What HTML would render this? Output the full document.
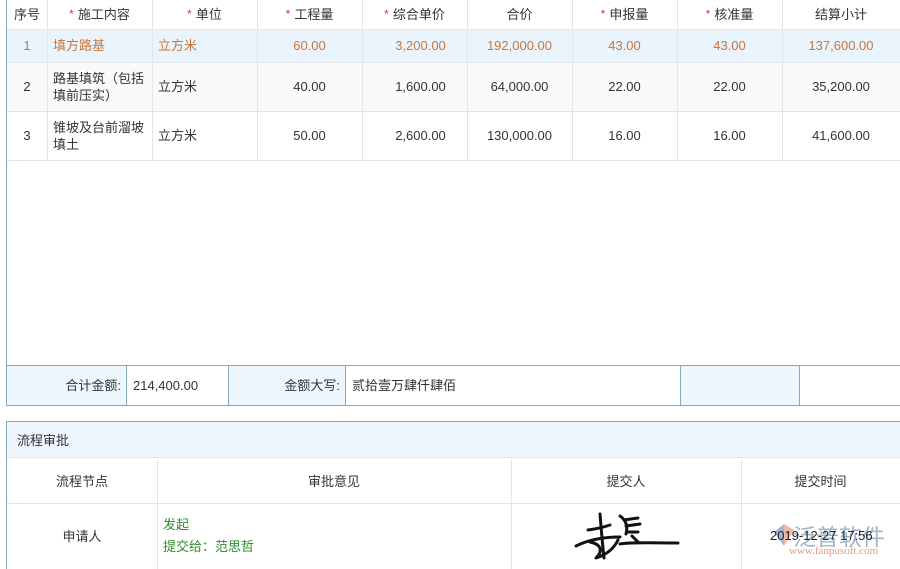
<!DOCTYPE html>
<html><head><meta charset="utf-8"><style>
*{margin:0;padding:0;box-sizing:border-box}
body{width:900px;height:569px;overflow:hidden;background:#fff;font-family:"Liberation Sans","Noto Sans CJK SC",sans-serif;font-size:13px;color:#333;position:relative}
.a{position:absolute}
.c{position:absolute;display:flex;align-items:center;justify-content:center;text-align:center;line-height:17px}
.l{justify-content:flex-start;text-align:left;padding-left:6px}
.r{justify-content:flex-end;padding-right:6px}
.s{color:#d9363e;margin-right:4px;font-size:12px}
.o{color:#c9763a}
.g{color:#2e8b2e}
</style></head><body>
<div class="a" style="left:6px;top:0;width:1px;height:405px;background:#86a9ba"></div>
<div class="a" style="left:7px;top:29px;width:893px;height:33px;background:#eaf4fd"></div>
<div class="a" style="left:7px;top:62px;width:893px;height:49px;background:#fafafa"></div>
<div class="a" style="left:7px;top:29px;width:893px;height:1px;background:#e2e6ea"></div>
<div class="a" style="left:7px;top:62px;width:893px;height:1px;background:#e2e6ea"></div>
<div class="a" style="left:7px;top:111px;width:893px;height:1px;background:#e2e6ea"></div>
<div class="a" style="left:7px;top:160px;width:893px;height:1px;background:#e2e6ea"></div>
<div class="a" style="left:47px;top:0;width:1px;height:160px;background:#e2e6ea"></div>
<div class="a" style="left:152px;top:0;width:1px;height:160px;background:#e2e6ea"></div>
<div class="a" style="left:257px;top:0;width:1px;height:160px;background:#e2e6ea"></div>
<div class="a" style="left:362px;top:0;width:1px;height:160px;background:#e2e6ea"></div>
<div class="a" style="left:467px;top:0;width:1px;height:160px;background:#e2e6ea"></div>
<div class="a" style="left:572px;top:0;width:1px;height:160px;background:#e2e6ea"></div>
<div class="a" style="left:677px;top:0;width:1px;height:160px;background:#e2e6ea"></div>
<div class="a" style="left:782px;top:0;width:1px;height:160px;background:#e2e6ea"></div>
<div class="c" style="left:7px;top:0;width:40px;height:29px">序号</div>
<div class="c" style="left:47px;top:0;width:105px;height:29px"><span class="s">*</span>施工内容</div>
<div class="c" style="left:152px;top:0;width:105px;height:29px"><span class="s">*</span>单位</div>
<div class="c" style="left:257px;top:0;width:105px;height:29px"><span class="s">*</span>工程量</div>
<div class="c" style="left:362px;top:0;width:105px;height:29px"><span class="s">*</span>综合单价</div>
<div class="c" style="left:467px;top:0;width:105px;height:29px">合价</div>
<div class="c" style="left:572px;top:0;width:105px;height:29px"><span class="s">*</span>申报量</div>
<div class="c" style="left:677px;top:0;width:105px;height:29px"><span class="s">*</span>核准量</div>
<div class="c" style="left:782px;top:0;width:118px;height:29px">结算小计</div>
<div class="c o" style="left:7px;top:29px;width:40px;height:33px">1</div>
<div class="c l o" style="left:47px;top:29px;width:105px;height:33px">填方路基</div>
<div class="c l o" style="left:152px;top:29px;width:105px;height:33px">立方米</div>
<div class="c o" style="left:257px;top:29px;width:105px;height:33px">60.00</div>
<div class="c o" style="left:362px;top:29px;width:105px;height:33px;padding-left:12px">3,200.00</div>
<div class="c o" style="left:467px;top:29px;width:105px;height:33px">192,000.00</div>
<div class="c o" style="left:572px;top:29px;width:105px;height:33px">43.00</div>
<div class="c o" style="left:677px;top:29px;width:105px;height:33px">43.00</div>
<div class="c o" style="left:782px;top:29px;width:118px;height:33px">137,600.00</div>
<div class="c" style="left:7px;top:62px;width:40px;height:49px">2</div>
<div class="c l" style="left:47px;top:62px;width:105px;height:49px">路基填筑（包括填前压实）</div>
<div class="c l" style="left:152px;top:62px;width:105px;height:49px">立方米</div>
<div class="c" style="left:257px;top:62px;width:105px;height:49px">40.00</div>
<div class="c" style="left:362px;top:62px;width:105px;height:49px;padding-left:12px">1,600.00</div>
<div class="c" style="left:467px;top:62px;width:105px;height:49px">64,000.00</div>
<div class="c" style="left:572px;top:62px;width:105px;height:49px">22.00</div>
<div class="c" style="left:677px;top:62px;width:105px;height:49px">22.00</div>
<div class="c" style="left:782px;top:62px;width:118px;height:49px">35,200.00</div>
<div class="c" style="left:7px;top:111px;width:40px;height:49px">3</div>
<div class="c l" style="left:47px;top:111px;width:105px;height:49px">锥坡及台前溜坡填土</div>
<div class="c l" style="left:152px;top:111px;width:105px;height:49px">立方米</div>
<div class="c" style="left:257px;top:111px;width:105px;height:49px">50.00</div>
<div class="c" style="left:362px;top:111px;width:105px;height:49px;padding-left:12px">2,600.00</div>
<div class="c" style="left:467px;top:111px;width:105px;height:49px">130,000.00</div>
<div class="c" style="left:572px;top:111px;width:105px;height:49px">16.00</div>
<div class="c" style="left:677px;top:111px;width:105px;height:49px">16.00</div>
<div class="c" style="left:782px;top:111px;width:118px;height:49px">41,600.00</div>
<div class="a" style="left:6px;top:365px;width:894px;height:41px;border:1px solid #86a9ba;border-right:none"></div>
<div class="a" style="left:7px;top:366px;width:120px;height:39px;background:#eef6fd;border-right:1px solid #86a9ba"></div>
<div class="a" style="left:228px;top:366px;width:118px;height:39px;background:#eef6fd;border-left:1px solid #86a9ba;border-right:1px solid #86a9ba"></div>
<div class="a" style="left:680px;top:366px;width:120px;height:39px;background:#eef6fd;border-left:1px solid #86a9ba;border-right:1px solid #86a9ba"></div>
<div class="c r" style="left:7px;top:366px;width:120px;height:39px">合计金额:</div>
<div class="c l" style="left:127px;top:366px;width:101px;height:39px">214,400.00</div>
<div class="c r" style="left:228px;top:366px;width:118px;height:39px">金额大写:</div>
<div class="c l" style="left:346px;top:366px;width:334px;height:39px">贰拾壹万肆仟肆佰</div>
<div class="a" style="left:6px;top:421px;width:894px;height:148px;border-left:1px solid #86a9ba;border-top:1px solid #86a9ba"></div>
<div class="a" style="left:7px;top:422px;width:893px;height:36px;background:#eef5fd;border-bottom:1px solid #e2e6ea"></div>
<div class="c l" style="left:7px;top:422px;width:200px;height:36px;padding-left:10px">流程审批</div>
<div class="a" style="left:7px;top:503px;width:893px;height:1px;background:#e2e6ea"></div>
<div class="a" style="left:157px;top:459px;width:1px;height:110px;background:#e2e6ea"></div>
<div class="a" style="left:511px;top:459px;width:1px;height:110px;background:#e2e6ea"></div>
<div class="a" style="left:741px;top:459px;width:1px;height:110px;background:#e2e6ea"></div>
<div class="c" style="left:7px;top:459px;width:150px;height:44px">流程节点</div>
<div class="c" style="left:157px;top:459px;width:354px;height:44px">审批意见</div>
<div class="c" style="left:511px;top:459px;width:230px;height:44px">提交人</div>
<div class="c" style="left:741px;top:459px;width:159px;height:44px">提交时间</div>
<div class="c" style="left:7px;top:504px;width:150px;height:65px">申请人</div>
<div class="a g" style="left:163px;top:514px;line-height:22px">发起<br>提交给：范思哲</div>
<svg class="a" style="left:574px;top:510px" width="106" height="52" viewBox="0 0 106 52">
<g fill="none" stroke="#111" stroke-width="3" stroke-linecap="round" stroke-linejoin="round">
<path d="M2 36 C14 30 30 27 46 27"/>
<path d="M14 20 C22 19 30 17 36 15"/>
<path d="M26 4 C27 16 28 30 30 48"/>
<path d="M16 32 C26 34 30 40 22 48 C34 44 40 38 44 30"/>
<path d="M46 6 C52 10 54 16 52 24"/>
<path d="M50 10 L64 8 M52 16 L66 14 M54 22 L64 22 M58 26 L64 32"/>
<path d="M46 34 C58 32 80 33 104 33"/>
</g></svg>
<svg class="a" style="left:772px;top:522px" width="24" height="26" viewBox="0 0 24 26"><path d="M12 2 L22 8 L12 24 Z" fill="#e89a80" opacity=".7"/><path d="M2 10 L12 2 L12 24 Z" fill="#7a9ab8" opacity=".7"/></svg>
<div class="a" style="left:793px;top:518px;font-size:23px;color:#8aa4be;opacity:.8">泛普软件</div>
<div class="a" style="left:789px;top:545px;font-size:11px;color:#e29a84;font-family:'Liberation Serif',serif">www.fanpusoft.com</div>
<div class="a" style="left:770px;top:528px;font-size:13px;color:#222">2019-12-27 17:56</div>
</body></html>
